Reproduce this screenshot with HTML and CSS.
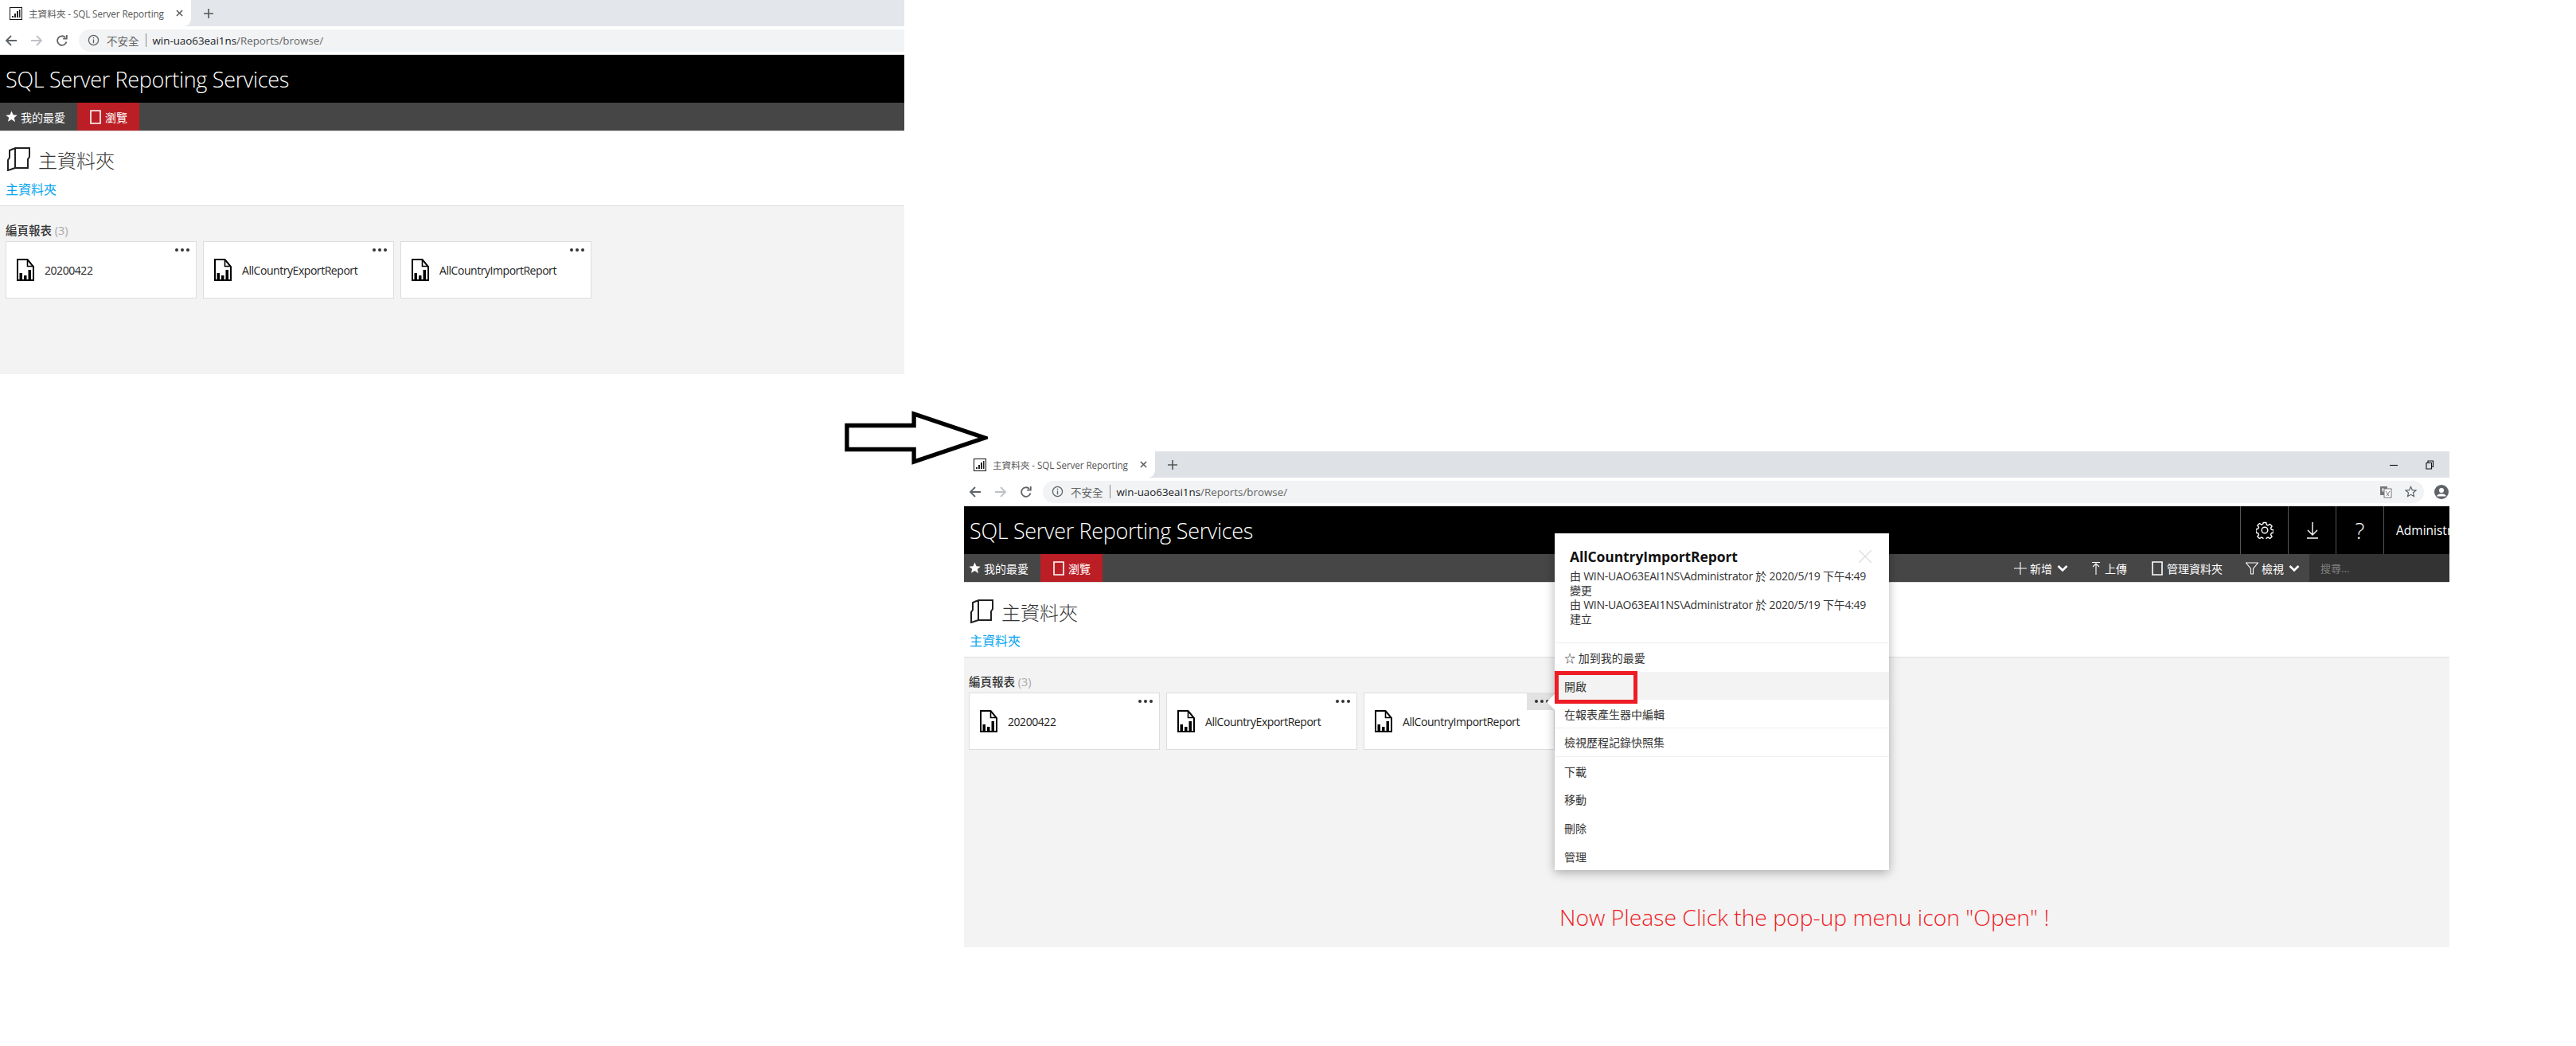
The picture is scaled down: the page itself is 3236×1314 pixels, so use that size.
FILE: index.html
```html
<!DOCTYPE html>
<html lang="zh-Hant">
<head>
<meta charset="utf-8">
<title>SQL Server Reporting Services</title>
<link rel="stylesheet" href="styles.css">
</head>
<body>
<svg width="0" height="0" class="defs">
  <symbol id="tabicon" viewBox="0 0 16 16"><rect x=".5" y=".5" width="15" height="15" fill="#fff" stroke="#111"/><path d="M3 11h2v2H3zM6 8h2v5H6zM9 5h2v8H9zM12 3h1.5v10H12z" fill="#222"/></symbol>
  <symbol id="report" viewBox="0 0 22 28"><path d="M1 1h12.500L21 10v17H1z" fill="#fff" stroke="#000" stroke-width="2"/><path d="M13.500 1v8.500H21" fill="none" stroke="#000" stroke-width="1.600"/><path d="M3.500 18H7v8H3.500zM9 21h3.500v5H9zM14.500 14H18v12h-3.500z" fill="#000"/></symbol>
  <symbol id="book" viewBox="0 0 30 30"><path d="M10 1H28V12L26 15V26H10ZM10 1L3 4V13L1 16V29L10 26" fill="none" stroke="#222" stroke-width="2"/></symbol>
  <symbol id="note" viewBox="0 0 14 18"><path d="M1 1h12v16H1z" fill="none" stroke="currentColor" stroke-width="1.600"/></symbol>
  <symbol id="starfill" viewBox="0 0 16 16"><path d="M8 .500l2.200 5.100 5.500.5-4.200 3.600 1.300 5.400L8 11.700l-4.800 2.900 1.300-5.400L.300 6.100l5.500-.5z" fill="#fff"/></symbol>
</svg>

<section class="window win-a">
  <div class="tabbar">
    <div class="tab">
      <svg class="tab-icon"><use href="#tabicon"/></svg>
      <span class="tab-title">主資料夾 - SQL Server Reporting</span>
      <svg class="tab-x" viewBox="0 0 10 10"><path d="M1 1l8 8M9 1l-8 8"/></svg>
    </div>
    <svg class="tab-plus" viewBox="0 0 12 12"><path d="M6 0v12M0 6h12"/></svg>
  </div>
  <div class="toolbar">
    <svg class="nav-ic" viewBox="0 0 16 16"><path d="M15 8H2M8 2L2 8l6 6" class="s-dark"/></svg>
    <svg class="nav-ic" viewBox="0 0 16 16"><path d="M1 8h13M8 2l6 6-6 6" class="s-light"/></svg>
    <svg class="nav-ic" viewBox="0 0 16 16"><path d="M13.500 9.500A5.800 5.800 0 1 1 12 4M13.800 1v4.600H9.200" class="s-dark"/></svg>
    <div class="address">
      <svg class="info" viewBox="0 0 16 16"><circle cx="8" cy="8" r="6.500"/><path d="M8 7v5M8 4v1.600"/></svg>
      <span class="insecure">不安全</span><i class="addr-sep"></i>
      <span class="url">win-uao63eai1ns<em>/Reports/browse/</em></span>
    </div>
  </div>
  <header class="brand"><h1>SQL Server Reporting Services</h1></header>
  <nav class="navbar">
    <a class="nav-fav"><svg class="star"><use href="#starfill"/></svg>我的最愛</a>
    <a class="nav-browse"><svg class="note"><use href="#note"/></svg>瀏覽</a>
  </nav>
  <div class="heading">
    <svg class="book"><use href="#book"/></svg>
    <h2>主資料夾</h2>
  </div>
  <a class="crumb">主資料夾</a>
  <main class="content">
    <h3>編頁報表 <span>(3)</span></h3>
    <div class="cards">
      <article class="card"><span class="dots"><i></i><i></i><i></i></span><svg class="report"><use href="#report"/></svg><span>20200422</span></article>
      <article class="card"><span class="dots"><i></i><i></i><i></i></span><svg class="report"><use href="#report"/></svg><span>AllCountryExportReport</span></article>
      <article class="card"><span class="dots"><i></i><i></i><i></i></span><svg class="report"><use href="#report"/></svg><span>AllCountryImportReport</span></article>
    </div>
  </main>
</section>

<svg class="big-arrow" viewBox="0 0 186 70"><path d="M3 19h87V4l92 31-92 31V50H3z"/></svg>

<section class="window win-b">
  <div class="tabbar">
    <div class="tab">
      <svg class="tab-icon"><use href="#tabicon"/></svg>
      <span class="tab-title">主資料夾 - SQL Server Reporting</span>
      <svg class="tab-x" viewBox="0 0 10 10"><path d="M1 1l8 8M9 1l-8 8"/></svg>
    </div>
    <svg class="tab-plus" viewBox="0 0 12 12"><path d="M6 0v12M0 6h12"/></svg>
    <div class="winctl">
      <svg class="win-ic" viewBox="0 0 12 12"><path d="M1 6.500h10"/></svg>
      <svg class="win-ic" viewBox="0 0 12 12"><path d="M2 3.500h6.500v7.500H2zM4 3.500V1h6.500v7.500H8.500"/></svg>
    </div>
  </div>
  <div class="toolbar">
    <svg class="nav-ic" viewBox="0 0 16 16"><path d="M15 8H2M8 2L2 8l6 6" class="s-dark"/></svg>
    <svg class="nav-ic" viewBox="0 0 16 16"><path d="M1 8h13M8 2l6 6-6 6" class="s-light"/></svg>
    <svg class="nav-ic" viewBox="0 0 16 16"><path d="M13.500 9.500A5.800 5.800 0 1 1 12 4M13.800 1v4.600H9.200" class="s-dark"/></svg>
    <div class="address wide">
      <svg class="info" viewBox="0 0 16 16"><circle cx="8" cy="8" r="6.500"/><path d="M8 7v5M8 4v1.600"/></svg>
      <span class="insecure">不安全</span><i class="addr-sep"></i>
      <span class="url">win-uao63eai1ns<em>/Reports/browse/</em></span>
      <svg class="translate" viewBox="0 0 16 16"><rect x="1" y="1" width="9" height="11" fill="#777"/><rect x="6" y="4" width="9" height="11" fill="#fff" stroke="#777"/><path d="M3 5h3M4.500 3v5" stroke="#fff" fill="none"/><path d="M8 7l4 6M13 7l-4 6" stroke="#777" fill="none"/></svg>
      <svg class="addr-star" viewBox="0 0 16 16"><path d="M8 1.500l2 4.500 4.800.5-3.600 3.200 1 4.800L8 12.100 3.800 14.500l1-4.800L1.200 6.500 6 6z"/></svg>
    </div>
    <svg class="account" viewBox="0 0 18 18"><circle cx="9" cy="9" r="9" fill="#5f6368"/><circle cx="9" cy="7" r="3" fill="#fff"/><path d="M3.500 13.500c2-3 9-3 11 0v1h-11z" fill="#fff"/></svg>
  </div>
  <header class="brand">
    <h1>SQL Server Reporting Services</h1>
    <div class="brand-tools">
      <span class="tool"><svg class="tool-ic" viewBox="0 0 22 22"><circle cx="11" cy="11" r="3.800"/><path d="M9.200 1.500h3.600l.5 2.700 1.900.8 2.300-1.600 2.600 2.600-1.600 2.300.8 1.900 2.700.5v3.600l-2.700.5-.8 1.900 1.600 2.300-2.600 2.600-2.300-1.600-1.900.8-.5 2.700H9.200l-.5-2.700-1.900-.8-2.300 1.600-2.600-2.600 1.600-2.300-.8-1.900-2.700-.5V9.800l2.700-.5.8-1.900-1.600-2.300 2.600-2.600 2.300 1.600 1.900-.8z" stroke-linejoin="round"/></svg></span>
      <span class="tool"><svg class="tool-ic" viewBox="0 0 22 22"><path d="M11 1v16M5 11l6 6 6-6M4 21h14"/></svg></span>
      <span class="tool tool-q">?</span>
      <span class="tool tool-user">Administrator</span>
    </div>
  </header>
  <nav class="navbar">
    <a class="nav-fav"><svg class="star"><use href="#starfill"/></svg>我的最愛</a>
    <a class="nav-browse"><svg class="note"><use href="#note"/></svg>瀏覽</a>
    <div class="actions">
      <a class="act act-new"><svg class="act-ic" viewBox="0 0 16 16"><path d="M8 0v16M0 8h16"/></svg>新增<svg class="chev" viewBox="0 0 14 10"><path d="M1.500 2L7 7.500 12.500 2"/></svg></a>
      <a class="act act-up"><svg class="act-ic narrow" viewBox="0 0 10 16"><path d="M5 16V2M1 6l4-4 4 4M0 .500h10"/></svg>上傳</a>
      <a class="act act-mg"><svg class="note"><use href="#note"/></svg>管理資料夾</a>
      <a class="act act-view"><svg class="act-ic" viewBox="0 0 16 16"><path d="M.500 1h15L9.500 8.500V15h-3V8.500z"/></svg>檢視<svg class="chev" viewBox="0 0 14 10"><path d="M1.500 2L7 7.500 12.500 2"/></svg></a>
      <div class="search">搜尋...</div>
    </div>
  </nav>
  <div class="heading">
    <svg class="book"><use href="#book"/></svg>
    <h2>主資料夾</h2>
  </div>
  <a class="crumb">主資料夾</a>
  <main class="content">
    <h3>編頁報表 <span>(3)</span></h3>
    <div class="cards">
      <article class="card"><span class="dots"><i></i><i></i><i></i></span><svg class="report"><use href="#report"/></svg><span>20200422</span></article>
      <article class="card"><span class="dots"><i></i><i></i><i></i></span><svg class="report"><use href="#report"/></svg><span>AllCountryExportReport</span></article>
      <article class="card"><span class="dots active"><i></i><i></i><i></i></span><svg class="report"><use href="#report"/></svg><span>AllCountryImportReport</span></article>
    </div>
    <p class="note-red">Now Please Click the pop-up menu icon "Open" !</p>
  </main>

  <aside class="popup">
    <span class="pointer"></span>
    <div class="pop-head">
      <svg class="pop-close" viewBox="0 0 16 16"><path d="M0 0l16 16M16 0L0 16"/></svg>
      <h4>AllCountryImportReport</h4>
      <p>由 WIN-UAO63EAI1NS\Administrator 於 2020/5/19 下午4:49 變更</p>
      <p>由 WIN-UAO63EAI1NS\Administrator 於 2020/5/19 下午4:49 建立</p>
    </div>
    <ul class="menu">
      <li>☆ 加到我的最愛</li>
      <li class="hover"><span class="redbox"></span>開啟</li>
      <li class="line">在報表產生器中編輯</li>
      <li class="line">檢視歷程記錄快照集</li>
      <li>下載</li>
      <li>移動</li>
      <li>刪除</li>
      <li>管理</li>
    </ul>
  </aside>
</section>
</body>
</html>
```
FILE: styles.css
```css
* { box-sizing: border-box; margin: 0; padding: 0; }
html, body { width: 3236px; height: 1314px; overflow: hidden; background: #fff; }
body { position: relative; font-family: "Open Sans", "Noto Sans CJK TC", sans-serif; color: #222; }
.defs { position: absolute; }
em { font-style: normal; }
i { font-style: normal; }

.window { position: absolute; display: flex; flex-direction: column; overflow: hidden; background: #fff; }
.win-a { left: 0; top: 0; width: 1136px; height: 470px; }
.win-b { left: 1211px; top: 567px; width: 1866px; height: 623px; }
.big-arrow { position: absolute; left: 1061px; top: 516px; width: 180px; height: 68px; }
.big-arrow path { fill: #fff; stroke: #000; stroke-width: 5.500; }

.tabbar { height: 33px; flex: none; background: #e3e6ea; display: flex; align-items: center; }
.win-b .tabbar { background: #dee1e6; }
.tab { width: 240px; height: 33px; background: #fff; border-bottom-right-radius: 9px; display: flex; align-items: center; padding-left: 12px; flex: none; }
.tab-icon { width: 16px; height: 16px; flex: none; }
.tab-title { margin-left: 8px; width: 172px; flex: none; white-space: nowrap; font-size: 11.700px; letter-spacing: -.1px; color: #555; }
.tab-x { width: 9px; height: 9px; margin-left: 13px; flex: none; stroke: #555; stroke-width: 1.600; fill: none; }
.tab-plus { width: 12px; height: 12px; margin-left: 16px; flex: none; stroke: #555; stroke-width: 1.600; fill: none; }
.winctl { margin-left: auto; display: flex; gap: 33px; padding-right: 19px; }
.win-ic { width: 12px; height: 12px; stroke: #111; stroke-width: 1.100; fill: none; }

.toolbar { height: 36px; flex: none; background: #fff; border-bottom: 1px solid #dcdcdc; display: flex; align-items: center; padding-left: 6px; gap: 16px; }
.nav-ic { width: 16px; height: 16px; flex: none; fill: none; stroke-width: 1.800; }
.s-dark { stroke: #5f6368; }
.s-light { stroke: #bdc1c6; }
.address { flex: 1; height: 28px; margin-left: -3px; background: #f1f3f4; border-radius: 14px 0 0 14px; display: flex; align-items: center; padding-left: 11px; font-size: 13px; }
.address.wide { flex: none; width: 1735px; border-radius: 14px; }
.info { width: 15px; height: 15px; fill: none; stroke: #5f6368; stroke-width: 1.400; flex: none; }
.insecure { margin-left: 9px; color: #666; font-size: 13.500px; white-space: nowrap; }
.addr-sep { width: 1px; height: 17px; background: #888; margin: 0 8px 0 8px; flex: none; }
.url { color: #202124; white-space: nowrap; font-size: 13.350px; }
.url em { color: #666; }
.translate { width: 16px; height: 16px; margin-left: auto; flex: none; }
.addr-star { width: 15px; height: 15px; margin: 0 9px 0 16px; flex: none; fill: none; stroke: #5f6368; stroke-width: 1.300; }
.account { width: 18px; height: 18px; margin-left: -3px; flex: none; }

.brand { height: 60px; flex: none; background: #000; display: flex; align-items: center; justify-content: space-between; }
.brand h1 { margin-left: 7px; font-size: 27px; font-weight: 300; color: #fff; letter-spacing: -.32px; white-space: nowrap; }
.brand-tools { display: flex; height: 60px; flex: none; width: 263px; overflow: hidden; }
.tool { border-left: 1px solid #555; width: 60px; flex: none; display: flex; align-items: center; justify-content: center; color: #fff; }
.tool-ic { width: 22px; height: 22px; fill: none; stroke: #fff; stroke-width: 1.400; }
.tool-q { font-size: 28px; font-weight: 300; }
.tool-user { width: auto; padding-left: 15px; font-size: 15.500px; white-space: nowrap; justify-content: flex-start; }

.navbar { height: 36px; flex: none; background: #464646; border-bottom: 1px solid #ddd; display: flex; align-items: stretch; color: #fff; font-size: 14px; }
.navbar a { display: flex; align-items: center; white-space: nowrap; }
.nav-fav { width: 97px; padding-left: 7px; flex: none; }
.win-b .nav-fav { width: 96px; padding-left: 6px; }
.star { width: 15px; height: 15px; margin-right: 4px; flex: none; }
.nav-browse { width: 78px; padding-left: 16px; background: #bb1f25; flex: none; }
.note { width: 14px; height: 18px; margin-right: 5px; flex: none; color: #fff; }
.actions { margin-left: auto; display: flex; align-items: stretch; }
.act { flex: none; }
.act-ic { width: 16px; height: 16px; flex: none; margin-right: 4px; fill: none; stroke: #fff; stroke-width: 1.100; }
.act-ic.narrow { width: 10px; margin-right: 6px; }
.chev { width: 14px; height: 10px; margin-left: 6px; fill: none; stroke: #fff; stroke-width: 2.600; flex: none; }
.act-up { margin-left: 30px; }
.act-mg { margin-left: 31px; }
.act-view { margin-left: 29px; }
.search { width: 176px; margin-left: 12px; padding-left: 14px; background: #333; color: #808080; display: flex; align-items: center; font-size: 13px; }

.heading { display: flex; align-items: center; flex: none; height: 48px; margin-top: 11px; padding-left: 9px; }
.win-b .heading { padding-left: 8px; margin-top: 12px; }
.book { width: 30px; height: 30px; flex: none; }
.heading h2 { margin-left: 9px; font-size: 24px; font-weight: 300; color: #333; }
.crumb { flex: none; display: block; margin: 3px 0 0 7px; height: 31px; font-size: 16px; line-height: 22px; color: #01a4ef; }
.win-b .crumb { margin-top: 2px; }

.content { flex: 1; position: relative; background: #f3f3f3; border-top: 1px solid #ddd; padding: 21px 7px 0; }
.content h3 { font-size: 14.500px; font-weight: 500; line-height: 20px; color: #333; }
.content h3 span { color: #aaa; font-weight: 400; }
.cards { display: flex; gap: 8px; margin-top: 3px; }
.win-b .content { padding-left: 6px; }
.card { position: relative; width: 240px; height: 72px; flex: none; background: #fff; border: 1px solid #ddd; display: flex; align-items: center; padding-left: 13px; font-size: 14px; letter-spacing: -.45px; color: #222; }
.report { width: 22px; height: 28px; margin-right: 13px; flex: none; }
.dots { position: absolute; right: 0; top: -1px; width: 36px; height: 22px; display: flex; align-items: center; justify-content: center; gap: 3px; padding-left: 2px; }
.dots i { width: 4px; height: 4px; border-radius: 50%; background: #333; }
.dots.active { background: #e2e2e2; right: -2px; }
.note-red { position: absolute; left: 748px; top: 307px; font-size: 28.300px; font-weight: 300; color: #ee1c25; white-space: nowrap; }

.popup { position: absolute; left: 742px; top: 103px; width: 420px; height: 423px; background: #fff; display: flex; flex-direction: column; box-shadow: 0 3px 12px rgba(0,0,0,.3); color: #333; }
.pointer { position: absolute; left: -7px; top: 205px; width: 14px; height: 14px; background: #fff; transform: rotate(45deg); }
.pop-head { position: relative; height: 138px; flex: none; padding: 17px 19px 0; border-bottom: 1px solid #eee; font-size: 14px; line-height: 18px; }
.pop-head h4 { font-size: 17.500px; font-weight: 700; line-height: 24px; color: #111; letter-spacing: -.1px; margin-bottom: 4px; }
.pop-head p { letter-spacing: -.25px; }
.pop-close { position: absolute; right: 22px; top: 21px; width: 16px; height: 16px; stroke: #d8d8d8; stroke-width: 1.200; fill: none; }
.menu { list-style: none; flex: 1; display: flex; flex-direction: column; }
.menu li { position: relative; height: 35.700px; flex: none; display: flex; align-items: center; padding-left: 12px; font-size: 14px; color: #333; }
.menu li.hover { background: #f3f3f3; }
.menu li.line { border-bottom: 1px solid #eee; }
.redbox { position: absolute; left: 0; top: -1px; width: 104px; height: 41px; border: 5px solid #ee1c25; }
```
